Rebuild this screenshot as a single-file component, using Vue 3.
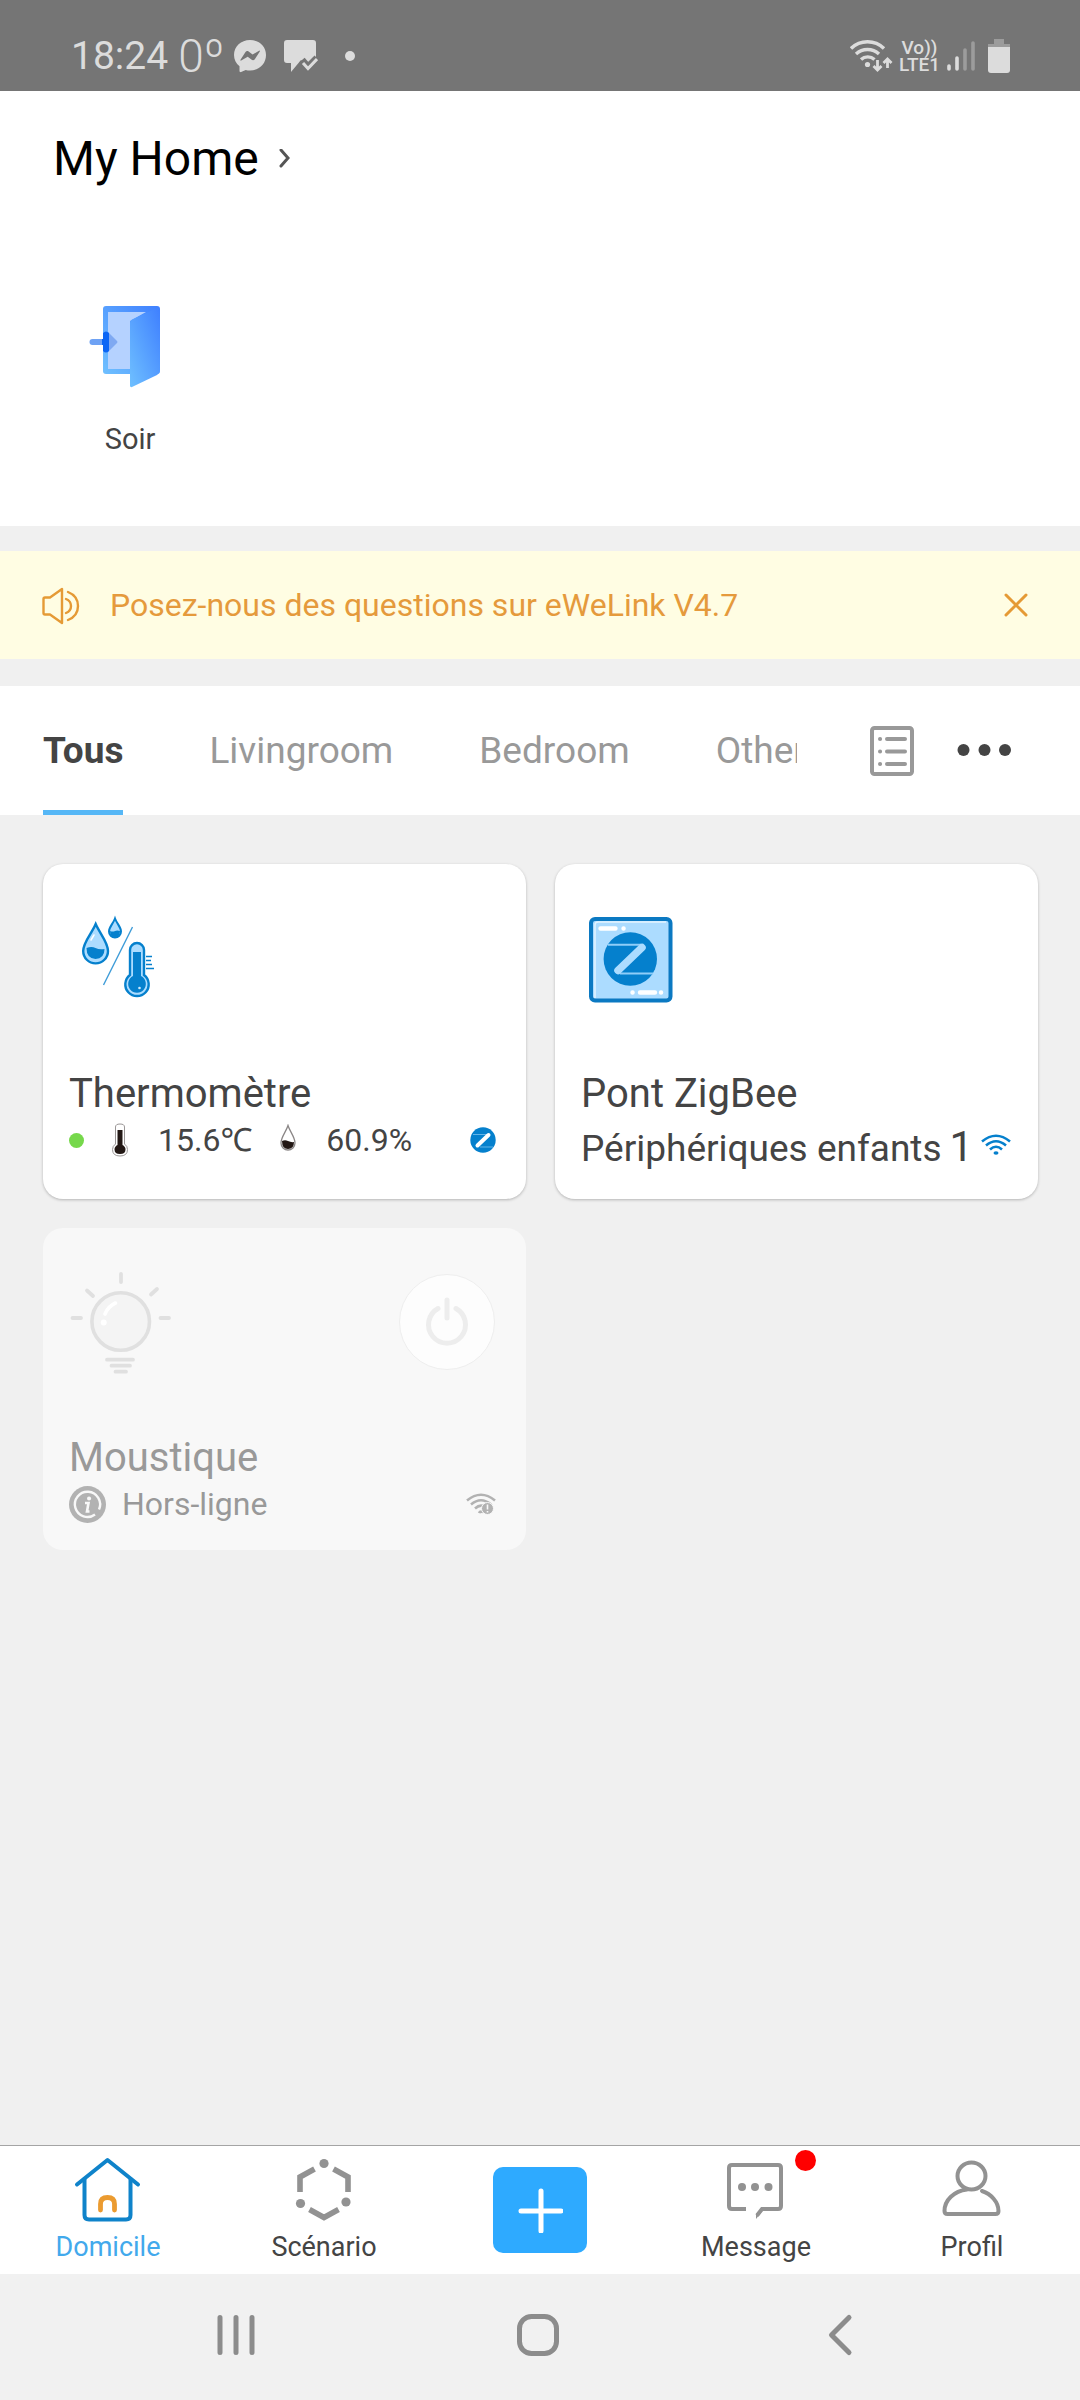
<script setup>
import { ref } from 'vue'

const rooms = ['Tous', 'Livingroom', 'Bedroom', 'Other']
const activeRoom = ref('Tous')
const noticeOpen = ref(true)
</script>

<template>
  <div class="screen">
    <div class="status-bar">
      <span class="clock">18:24</span>
      <span class="weather">0º</span>
      <svg class="messenger" width="32" height="34" viewBox="0 0 32 34">
        <path fill="#dcdcdc" d="M16 1C7 1 0 7.400 0 16c0 4.600 2 8.500 5.500 11.300V32c0 .9.8 1.400 1.600 1l4.600-2c1.400.4 2.800.5 4.300.5 9 0 16-6.500 16-15.500S25 1 16 1z" />
        <path fill="#757575" d="M6.500 20.800l5-7.800c.7-1 2.100-1.300 3.100-.5l4 3 6.500-3.800c.6-.3 1 .2.7.8l-5 7.800c-.7 1-2.100 1.300-3.100.5l-4-3-6.500 3.800c-.6.3-1-.2-.7-.8z" />
      </svg>
      <svg class="bubble" width="34" height="34" viewBox="0 0 34 34">
        <path fill="#dcdcdc" d="M3 1h26q3 0 3 3v16l-3 0-7 6-5-5L7 33V24H3q-3 0-3-3V4q0-3 3-3z" />
        <path fill="none" stroke="#757575" stroke-width="7" d="M18 21l6 7 9-9" />
        <path fill="none" stroke="#dcdcdc" stroke-width="3" d="M19 24l5 5.500 9-9.500" />
      </svg>
      <i class="more-dot"></i>
      <span class="grow"></span>
      <svg class="sb-wifi" width="43" height="34" viewBox="0 0 43 34">
        <g fill="none" stroke="#dcdcdc" stroke-width="3.400">
          <path d="M1 9.500a23.500 23.500 0 0 1 33 0" />
          <path d="M6 15a17 17 0 0 1 23 0" />
          <path d="M11 20.500a10 10 0 0 1 13.500 0" />
          <path stroke-width="2.800" d="M27.500 21v10M23.500 27l4 4 4-4M37.500 29V20M33.500 24l4-4 4 4" />
        </g>
        <circle cx="17.500" cy="25.500" r="2.600" fill="#dcdcdc" />
      </svg>
      <span class="volte"><span>Vo))</span><span>LTE1</span></span>
      <svg class="signal" width="28" height="32" viewBox="0 0 28 32">
        <g stroke-width="3.600" stroke-linecap="round">
          <path stroke="#dcdcdc" d="M2 26v3M10 18v11" />
          <path stroke="#9c9c9c" d="M18 10v19M26 3v26" />
        </g>
      </svg>
      <svg class="battery" width="22" height="34" viewBox="0 0 22 34">
        <path fill="#9c9c9c" d="M6 0h10v5h6v5H0V5h6z" />
        <path fill="#dcdcdc" d="M0 8h22v23q0 3-3 3H3q-3 0-3-3z" />
      </svg>
    </div>

    <header class="home">
      <button class="home-name" type="button">
        <span>My Home</span>
        <svg width="12" height="20" viewBox="0 0 12 20">
          <path d="M2 1l7 8-7 8" fill="none" stroke="#555" stroke-width="3" stroke-linecap="round" />
        </svg>
      </button>
      <button class="scene" type="button">
        <svg width="82" height="84" viewBox="0 0 82 84">
          <defs>
            <linearGradient id="door" x1="0" y1="1" x2="1" y2="0">
              <stop offset="0" stop-color="#6fc0ff" />
              <stop offset="1" stop-color="#3f80ff" />
            </linearGradient>
          </defs>
          <rect x="14" y="1" width="57" height="68" rx="3" fill="url(#door)" />
          <path d="M19 7h38L41 16v48H19z" fill="#b5d2ff" />
          <path d="M71 5v60q0 3-3 5L43 82q-2 .6-2-1.500V18q0-2 2-3.500L66 4z" fill="url(#door)" />
          <path d="M19 27l9 9q1 1 0 2l-9 9z" fill="#7fa9f2" />
          <path d="M3.500 37H17" stroke="#6ea2f4" stroke-width="6" stroke-linecap="round" />
          <path d="M14 28q3-3 6 0v18q-3 3-6 0v-6h-1v-6h1z" fill="#0c66f5" />
        </svg>
        <span>Soir</span>
      </button>
    </header>

    <section v-if="noticeOpen" class="notice">
      <svg width="40" height="40" viewBox="0 0 40 40">
        <g fill="none" stroke="#e59a35" stroke-width="2.400" stroke-linejoin="round" stroke-linecap="round">
          <path d="M4 12.500h5L21 4v34L9 29.500H4q-1.500 0-1.500-1.500V14q0-1.500 1.500-1.500z" />
          <path d="M25 14q5 2 5 7t-5 7" />
          <path d="M27 7q10 4 10 14t-10 14" />
        </g>
      </svg>
      <p>Posez-nous des questions sur eWeLink V4.7</p>
      <button type="button" aria-label="Fermer" @click="noticeOpen = false">
        <svg width="24" height="24" viewBox="0 0 24 24">
          <path d="M2 2l20 20M22 2L2 22" stroke="#e59a35" stroke-width="3" stroke-linecap="round" />
        </svg>
      </button>
    </section>

    <nav class="rooms">
      <div class="room-list">
        <button
          v-for="room in rooms"
          :key="room"
          type="button"
          :class="{ active: room === activeRoom }"
          @click="activeRoom = room"
        >{{ room }}</button>
      </div>
      <div class="room-tools">
        <button type="button" aria-label="Liste">
          <svg width="44" height="50" viewBox="0 0 44 50">
            <rect x="2" y="2" width="40" height="46" rx="2.500" fill="none" stroke="#999" stroke-width="4" />
            <path d="M17 13h18M17 25.500h18M17 38h18" stroke="#999" stroke-width="4" stroke-linecap="round" />
            <path d="M10 13h.1M10 25.500h.1M10 38h.1" stroke="#999" stroke-width="4" stroke-linecap="round" />
          </svg>
        </button>
        <button type="button" aria-label="Plus d’options">
          <svg width="54" height="14" viewBox="0 0 54 14">
            <g fill="#444"><circle cx="6.500" cy="6" r="6" /><circle cx="27.500" cy="6" r="6" /><circle cx="48" cy="6" r="6" /></g>
          </svg>
        </button>
      </div>
    </nav>

    <main class="devices">
      <article class="card">
        <div class="card-top">
          <svg width="108" height="108" viewBox="0 0 108 108">
            <path d="M26.700 20C31 30 39 38 39 47a12.400 12.400 0 0 1-24.800 0C14.200 38 22.500 30 26.700 20z" fill="#acdcff" stroke="#0580cd" stroke-width="2.400" />
            <path d="M17.500 44q5-2 9 0t9 1q0 9.500-9 10-9-.5-9-11z" fill="#0580cd" />
            <path d="M46 14.500C48 20 52 23 52 27.500a6 6 0 0 1-12 0C40 23 44 20 46 14.500z" fill="#acdcff" stroke="#0580cd" stroke-width="2" />
            <path d="M41 27q3 1 5 0t5 0q0 6-5 6t-5-6z" fill="#0580cd" />
            <path d="M63.500 23L34.500 81" stroke="#3d9bd8" stroke-width="1.400" />
            <path d="M61 46a7 7 0 0 1 14 0v25a11.700 11.700 0 1 1-14 0z" fill="#acdcff" stroke="#0580cd" stroke-width="2.400" />
            <path d="M64 48h8v24a8.800 8.800 0 1 1-8 0z" fill="#0580cd" />
            <path d="M77 52.500h6M77 56.500h5M77 60.500h6M77 64.500h8" stroke="#0580cd" stroke-width="1.600" />
            <circle cx="70.500" cy="84" r="1.300" fill="#cdeaff" />
            <path d="M22 36l3-5" stroke="#fff" stroke-width="1.500" stroke-linecap="round" />
          </svg>
        </div>
        <h2>Thermomètre</h2>
        <div class="info climate">
          <i class="online"></i>
          <svg width="16" height="34" viewBox="0 0 16 34">
            <path d="M3.500 4q0-3 4.500-3t4.500 3v17q3 2 3 5.500 0 6.500-7.500 6.500T.5 26.500q0-3.500 3-5.500z" fill="#fff" stroke="#9b9797" />
            <path d="M5.500 7h5v15q3 1.500 3 4.500 0 4.500-5.500 4.500t-5.500-4.500q0-3 3-4.500z" fill="#231815" />
          </svg>
          <span class="reading">15.6℃</span>
          <svg width="16" height="32" viewBox="0 0 16 32">
            <path d="M8 1.500C10 8 15 13 15 19a7 7 0 0 1-14 0C1 13 6 8 8 1.500z" fill="#fff" stroke="#8b8787" stroke-width="1.300" />
            <path d="M2 17q3-1.500 6 0t6 1q0 7-6 7t-6-8z" fill="#231815" />
          </svg>
          <span class="reading">60.9%</span>
          <svg class="link" width="26" height="26" viewBox="0 0 26 26">
            <circle cx="13" cy="13" r="12.700" fill="#0580cd" />
            <path d="M3 7.500h14M10 20h13" stroke="#63b4e8" stroke-width="1" />
            <path d="M18.500 8L7.500 18.500" stroke="#fff" stroke-width="4" stroke-linecap="round" />
          </svg>
        </div>
      </article>

      <article class="card">
        <div class="card-top">
          <svg width="108" height="108" viewBox="0 0 108 108">
            <rect x="10" y="15" width="79.500" height="81.500" rx="4" fill="#acdcff" stroke="#0b79c2" stroke-width="4" />
            <path d="M14 94V21q0-3 3-3h68" fill="none" stroke="#e4f4ff" stroke-width="1.500" />
            <circle cx="49.300" cy="55" r="26.700" fill="#0580cd" />
            <path d="M27 40.800h33M39 69.500h33" stroke="#8fcdf8" stroke-width="2" />
            <path d="M61 43.500L37 66.500" stroke="#acdcff" stroke-width="7.500" stroke-linecap="round" />
            <path d="M19.500 24.500h15M42.500 24.500h.1M51.500 88.500h.1M59 88.500h15M80 88.500h.1" stroke="#fff" stroke-width="4.400" stroke-linecap="round" />
          </svg>
        </div>
        <h2>Pont ZigBee</h2>
        <div class="info bridge">
          <span class="children">Périphériques enfants</span>
          <span class="count">1</span>
          <svg class="link" width="30" height="22" viewBox="0 0 30 22">
            <g fill="none" stroke="#0580cd" stroke-width="2.600">
              <path d="M1 7.500q14-11.500 28 0" />
              <path d="M5 11.500q10-8.500 20 0" />
              <path d="M9 15.500q6-5.500 12 0" />
            </g>
            <ellipse cx="15" cy="19" rx="2.500" ry="1.800" fill="#0580cd" />
          </svg>
        </div>
      </article>

      <article class="card offline">
        <div class="card-top">
          <svg width="108" height="108" viewBox="0 0 108 108">
            <circle cx="51.700" cy="53.500" r="28.800" fill="#f4f4f4" stroke="#e0e0e0" stroke-width="3.600" />
            <g fill="none" stroke="#e0e0e0" stroke-width="3.800" stroke-linecap="round">
              <path d="M52 6v8M18 22.500l6 5.500M88 21l-6 5.500M3.500 50H12M91.500 50h8.500" />
              <path d="M38 91.700h26M42.500 97.700h18.500M46.500 103.700h10.500" />
            </g>
            <path d="M36 46q3-7.500 10.500-11" fill="none" stroke="#fff" stroke-width="3.600" stroke-linecap="round" />
            <circle cx="34.700" cy="54.500" r="3" fill="#fff" />
          </svg>
          <button class="power" type="button" aria-label="Allumer">
            <svg width="48" height="54" viewBox="0 0 48 54">
              <path d="M15 13.500a18.500 18.500 0 1 0 18 0M24 5v18" fill="none" stroke="#ededed" stroke-width="5" stroke-linecap="round" />
            </svg>
          </button>
        </div>
        <h2>Moustique</h2>
        <div class="info">
          <svg class="alert" width="37" height="37" viewBox="0 0 37 37">
            <circle cx="18.500" cy="18.500" r="18.500" fill="#b2b2b2" />
            <path d="M26 28.500a12.600 12.600 0 1 1 4-5" fill="none" stroke="#f8f8f8" stroke-width="2.400" />
            <path d="M20 12.500h.1" stroke="#f8f8f8" stroke-width="4" stroke-linecap="round" />
            <path d="M16 17h3.500L18 25.500h2.500" fill="none" stroke="#f8f8f8" stroke-width="2.600" />
          </svg>
          <span class="state">Hors-ligne</span>
          <svg class="link" width="30" height="22" viewBox="0 0 30 22">
            <g fill="none" stroke="#b2b2b2" stroke-width="2.600">
              <path d="M1 7.500q14-11.500 28 0" />
              <path d="M5 11.500q10-8.500 20 0" />
              <path d="M9 15.500q5-4.500 9-2M13 20q1-2 4-1" />
            </g>
            <circle cx="21.500" cy="15.500" r="6" fill="#b2b2b2" stroke="#f8f8f8" />
            <path d="M21.500 11.500v5M21.500 18v1.500" stroke="#f8f8f8" stroke-width="1.600" />
          </svg>
        </div>
      </article>
    </main>

    <nav class="tab-bar">
      <a href="#domicile" class="current">
        <svg width="68" height="68" viewBox="0 0 68 68">
          <g fill="none" stroke-linecap="round" stroke-linejoin="round">
            <path d="M10.500 23v36q0 4.500 4.500 4.500h37q4.500 0 4.500-4.500V23" stroke="#0f83ca" stroke-width="4" />
            <path d="M3 28.500L33.500 4 64 28.500" stroke="#0f83ca" stroke-width="4" />
            <path d="M26.500 54V48q0-6.500 7-6.500t7 6.500v6" stroke="#eb9b30" stroke-width="4.800" />
          </g>
        </svg>
        <span>Domicile</span>
      </a>
      <a href="#scenario">
        <svg width="68" height="68" viewBox="0 0 68 68">
          <path d="M24.500 13L10 21v15M43.500 13L58 21v15M19.500 53.500L34 61.500l14.500-8" fill="none" stroke="#929292" stroke-width="5.600" />
          <g fill="#929292"><circle cx="34" cy="7.500" r="4.600" /><circle cx="10.500" cy="47.500" r="4.600" /><circle cx="56" cy="46" r="4.600" /></g>
        </svg>
        <span>Scénario</span>
      </a>
      <div class="add-cell">
        <button class="add" type="button" aria-label="Ajouter">
          <svg width="46" height="46" viewBox="0 0 46 46">
            <path d="M24 4v40M4 24h40" stroke="#fff" stroke-width="5" stroke-linecap="round" />
          </svg>
        </button>
      </div>
      <a href="#message">
        <span class="badged">
          <svg width="68" height="68" viewBox="0 0 68 68">
            <path d="M24 53H10q-3 0-3-3V12q0-3 3-3h46q3 0 3 3v38q0 3-3 3H40l-5 6.500" fill="none" stroke="#929292" stroke-width="4" />
            <path d="M34 63v-5l4-4 3 .5z" fill="#929292" />
            <g fill="#929292"><circle cx="20" cy="31" r="4" /><circle cx="33" cy="31" r="4" /><circle cx="46.500" cy="31" r="4" /></g>
          </svg>
          <i class="badge"></i>
        </span>
        <span>Message</span>
      </a>
      <a href="#profil">
        <svg width="68" height="68" viewBox="0 0 68 68">
          <g fill="none" stroke="#929292" stroke-width="4" stroke-linecap="round">
            <ellipse cx="33.500" cy="20" rx="14" ry="13.500" />
            <path d="M29 33.500C16 35 6.500 44 6.500 55q0 3 3 3h48q3 0 3-3C60.500 46 53 38 44 35" />
          </g>
        </svg>
        <span>Profil</span>
      </a>
    </nav>

    <div class="system-nav">
      <button type="button" aria-label="Applications récentes">
        <svg width="44" height="44" viewBox="0 0 44 44">
          <path d="M6 4.500v35M22 4.500v35M38 4.500v35" stroke="#8c8c8c" stroke-width="5" stroke-linecap="round" />
        </svg>
      </button>
      <button type="button" aria-label="Accueil">
        <svg width="44" height="44" viewBox="0 0 44 44">
          <rect x="3.500" y="3.500" width="37" height="37" rx="12" fill="none" stroke="#8c8c8c" stroke-width="5" />
        </svg>
      </button>
      <button type="button" aria-label="Retour">
        <svg width="44" height="44" viewBox="0 0 44 44">
          <path d="M31 4.500L13.500 22 31 39.500" fill="none" stroke="#8c8c8c" stroke-width="5" stroke-linecap="round" stroke-linejoin="round" />
        </svg>
      </button>
    </div>
  </div>
</template>

<style>
body {
  background: #f0f0f0;
}
</style>

<style scoped>
.screen {
  display: flex;
  flex-direction: column;
  min-height: 100vh;
  font-family: Roboto, "Noto Sans", sans-serif;
  color: #444;
  background: #f0f0f0;
}
.screen *,
.screen {
  box-sizing: border-box;
}
svg {
  display: block;
  flex: none;
}
button {
  display: flex;
  align-items: center;
  padding: 0;
  border: 0;
  background: none;
  font: inherit;
  color: inherit;
  white-space: nowrap;
}

.status-bar {
  display: flex;
  align-items: center;
  height: 91px;
  padding: 20px 70px 0 71px;
  background: #757575;
  color: #dcdcdc;
}
.clock {
  font-size: 39px;
}
.weather {
  margin-left: 10px;
  font-size: 46px;
  font-weight: 300;
}
.messenger {
  margin-left: 10px;
}
.bubble {
  margin-left: 18px;
}
.more-dot {
  width: 10px;
  height: 10px;
  margin-left: 27px;
  border-radius: 50%;
  background: #dcdcdc;
}
.grow {
  flex: 1;
}
.volte {
  display: flex;
  flex-direction: column;
  align-items: center;
  margin: 0 7px 0 6px;
  font-size: 19px;
  font-weight: 500;
  line-height: 17px;
}
.battery {
  margin-left: 13px;
}

.home {
  padding: 38px 53px 70px;
  background: #fff;
}
.home-name {
  gap: 20px;
  font-size: 48px;
  line-height: 60px;
  color: #000;
}
.scene {
  flex-direction: column;
  width: 154px;
  margin-top: 116px;
  font-size: 29px;
  line-height: 34px;
}
.scene span {
  margin-top: 33px;
}

.notice {
  display: flex;
  align-items: center;
  height: 108px;
  margin: 25px 0 27px;
  padding: 0 52px 0 41px;
  background: #fffde3;
  color: #e59a3c;
  font-size: 32px;
}
.notice p {
  flex: 1;
  margin: 0 0 0 29px;
}

.rooms {
  display: flex;
  height: 129px;
  background: #fff;
}
.room-list {
  display: flex;
  flex: 1;
  gap: 86px;
  min-width: 0;
  padding-left: 43px;
  overflow: hidden;
}
.room-list button {
  flex: none;
  padding-top: 5px;
  border-bottom: 5px solid transparent;
  font-size: 37px;
  color: #999;
}
.room-list .active {
  border-color: #56b7f6;
  font-weight: 700;
  color: #444;
}
.room-tools {
  display: flex;
  flex: none;
  gap: 43px;
  padding: 0 69px 0 73px;
}

.devices {
  display: grid;
  flex: 1;
  grid-template-columns: 1fr 1fr;
  align-content: start;
  gap: 29px;
  padding: 49px 42px 49px 43px;
}
.card {
  display: flex;
  flex-direction: column;
  padding: 40px 27px 27px 26px;
  border-radius: 20px;
  background: #fff;
  box-shadow: 0 1px 3px rgba(0, 0, 0, 0.25);
}
.card-top {
  display: flex;
  align-items: center;
  justify-content: space-between;
  height: 108px;
}
h2 {
  margin: 58px 0 3px;
  font-size: 40px;
  font-weight: 400;
  line-height: 48px;
}
.info {
  display: flex;
  align-items: center;
  min-height: 38px;
  font-size: 32px;
  line-height: 38px;
  white-space: nowrap;
}
.link {
  margin: 0 3px 0 auto;
}
.online {
  width: 15px;
  height: 15px;
  margin-right: 28px;
  border-radius: 50%;
  background: #76d84b;
}
.reading {
  margin: 0 28px 0 30px;
}
.bridge {
  min-height: 51px;
  font-size: 37px;
}
.count {
  margin-left: 8px;
  font-size: 42px;
}
.children {
  padding-top: 4px;
}
.bridge .link {
  margin: 0 0 4px auto;
}
.offline {
  background: #f8f8f8;
  box-shadow: none;
  color: #999;
}
.state {
  margin-left: 16px;
}
.power {
  justify-content: center;
  width: 96px;
  height: 96px;
  margin-right: 4px;
  border: 1px solid #eee;
  border-radius: 50%;
  background: #fdfdfd;
}

.tab-bar {
  display: grid;
  grid-template-columns: repeat(5, 1fr);
  border-top: 1px solid #a4a4a4;
  background: #fff;
}
.tab-bar a {
  display: flex;
  flex-direction: column;
  align-items: center;
  gap: 7px;
  padding: 10px 0 11px;
  font-size: 27px;
  line-height: 32px;
  color: #444;
  text-decoration: none;
}
.tab-bar .current {
  color: #42a9ec;
}
.add-cell {
  display: flex;
  align-items: center;
  justify-content: center;
}
.add {
  justify-content: center;
  width: 94px;
  height: 86px;
  border-radius: 10px;
  background: #2eaaff;
}
.badged {
  position: relative;
}
.badge {
  position: absolute;
  top: -6px;
  right: -26px;
  width: 21px;
  height: 21px;
  border-radius: 50%;
  background: #f00;
}

.system-nav {
  display: grid;
  grid-template-columns: repeat(3, 1fr);
  height: 126px;
  padding: 0 89px 4px 85px;
  background: #f1f1f1;
}
.system-nav button {
  justify-content: center;
}
</style>
